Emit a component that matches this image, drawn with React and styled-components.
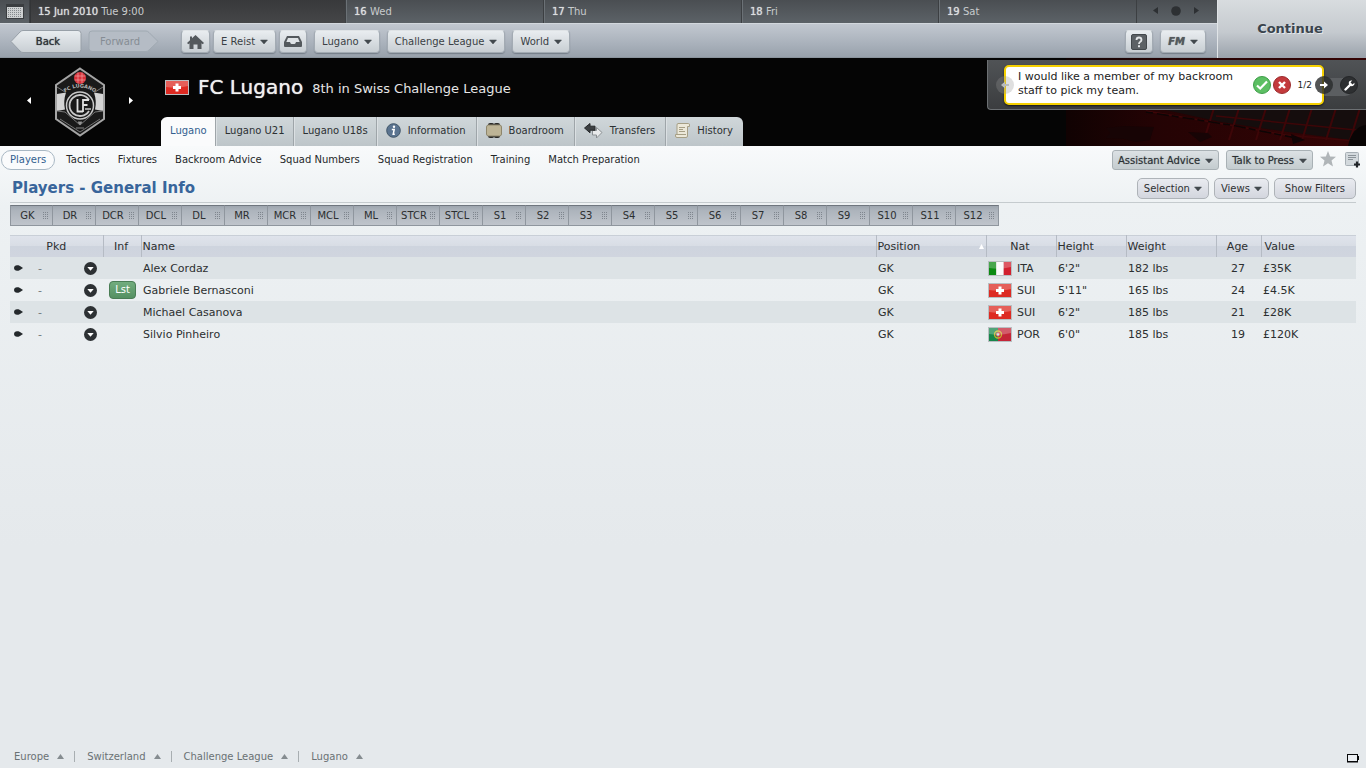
import React from "react";
import styled, { createGlobalStyle } from "styled-components";

const GlobalStyle = createGlobalStyle`
  * {
    box-sizing: border-box;
  }

  body {
    margin: 0;
    font-family: "DejaVu Sans", sans-serif;
    font-size: 10px;
    color: #2c2f30;
    background: #e5e9ec;
  }

  button {
    font-family: inherit;
    font-size: inherit;
    cursor: pointer;
  }

  a {
    color: inherit;
    text-decoration: none;
  }

  svg {
    display: block;
    flex-shrink: 0;
  }
`;

const Page = styled.div`
  min-height: 100vh;
  display: flex;
  flex-direction: column;
`;

/* ---------- top bar ---------- */

const TopBar = styled.header`
  display: flex;
  height: 58px;
`;

const TopLeft = styled.div`
  flex: 1;
  min-width: 0;
`;

const DateStrip = styled.div`
  display: grid;
  grid-template-columns: 30px 316fr 198fr 198fr 197fr 197fr 81px;
  height: 23px;
  background: linear-gradient(#4a4e52, #5c6267);
  color: #c8cbcd;
`;

const CalendarButton = styled.button`
  display: flex;
  align-items: center;
  justify-content: center;
  padding: 0;
  border: 0;
  background: transparent;
`;

const Day = styled.div`
  padding-left: 7px;
  line-height: 23px;
  font-size: 10px;
  border-left: 1px solid ${({ $today }) => ($today ? "#333537" : "#6b7176")};
  box-shadow: -1px 0 0 #3c3f42;
  background: ${({ $today }) => ($today ? "linear-gradient(#38393b, #454648)" : "none")};

  b {
    font-weight: normal;
    color: #dcdedf;
    text-shadow: 0 0 1px #dcdedf;
  }
`;

const DayControls = styled.div`
  display: flex;
  align-items: center;
  justify-content: center;
  padding: 0 2px 2px 0;
  border-left: 1px solid #3c3f42;

  button {
    display: block;
    padding: 0;
    border: 0;
    background: transparent;
  }
`;

const NavBar = styled.nav`
  display: flex;
  align-items: center;
  height: 35px;
  padding: 2px 11px 0 10px;
  border-top: 1px solid #d3d8dd;
  border-bottom: 1px solid #8a939c;
  background: linear-gradient(#c2c8d0, #a9b1bb 60%, #98a1ab);
`;

const ArrowButton = styled.button`
  position: relative;
  width: 72px;
  height: 23px;
  padding: 0 ${({ disabled }) => (disabled ? "8px 0 0" : "0 0 4px")};
  border: 0;
  background: transparent;
  color: ${({ disabled }) => (disabled ? "#858c94" : "#2e3338")};
  text-shadow: ${({ disabled }) => (disabled ? "none" : "0 0 1px #2e3338")};
  margin-right: ${({ disabled }) => (disabled ? "21px" : "6px")};

  svg {
    position: absolute;
    inset: 0;
  }

  span {
    position: relative;
  }
`;

const NavButton = styled.button`
  display: flex;
  align-items: center;
  justify-content: center;
  gap: 5px;
  min-width: 28px;
  height: 23px;
  padding: 0 ${({ $icon }) => ($icon ? "4px" : "7px")};
  margin-right: ${({ $gap }) => $gap || 0}px;
  border: 1px solid #a3abb3;
  border-top-color: #dfe3e6;
  border-radius: 4px;
  background: linear-gradient(#e9edf0, #c8ced3);
  box-shadow: 0 1px 1px rgba(60, 70, 80, 0.4);
  color: #3a3f44;
  white-space: nowrap;
`;

const Spacer = styled.div`
  flex: 1;
`;

const ContinueButton = styled.button`
  width: 149px;
  padding: 0 4px 2px 0;
  border: 0;
  border-left: 1px solid #e0e4e7;
  background: linear-gradient(#d8dcdf, #c5cacf 55%, #9aa2ab);
  color: #3a444d;
  && {
    font-size: 13px;
  }
  font-weight: bold;
  text-shadow: 1px 1px 0 #e4e8eb;
`;

/* ---------- club banner ---------- */

const Banner = styled.section`
  position: relative;
  display: flex;
  height: 88px;
  background: #050505;
  overflow: hidden;
`;

const StadiumArt = styled.div`
  position: absolute;
  top: 0;
  right: 0;
`;

const ClubSwitcher = styled.div`
  display: flex;
  align-items: center;
  justify-content: center;
  gap: 23px;
  width: 161px;
  padding-right: 1px;

  button {
    padding: 4px 0 8px;
    border: 0;
    background: transparent;
  }
`;

const ClubMain = styled.div`
  flex: 1;
  display: flex;
  flex-direction: column;
  justify-content: space-between;
`;

const ClubTitle = styled.div`
  display: flex;
  align-items: center;
  gap: 9px;
  height: 58px;
  padding-left: 4px;

  h1 {
    margin: 0;
    font-size: 20px;
    font-weight: normal;
    color: #f0f0f0;
    text-shadow: 0 0 1px #f0f0f0;
  }

  p {
    margin: 2px 0 0;
    font-size: 13px;
    color: #e6e6e6;
  }
`;

const Tabs = styled.nav`
  display: flex;
  align-self: flex-start;
  height: 29px;
  border-radius: 6px 6px 0 0;
  overflow: hidden;
`;

const Tab = styled.a`
  display: flex;
  align-items: center;
  gap: 7px;
  padding: 0 ${({ $icon }) => ($icon ? "10px 2px 8px" : "8px 2px")};
  border-right: 1px solid #9ea5a9;
  border-left: 1px solid ${({ $active }) => ($active ? "#fafbfc" : "#dbe0e3")};
  background: ${({ $active }) => ($active ? "#fafbfc" : "linear-gradient(#d0d7da, #bdc5c9)")};
  color: ${({ $active }) => ($active ? "#33608f" : "#2c3032")};
  white-space: nowrap;

  &:last-child {
    border-right: 0;
  }
`;

const MessagePanel = styled.aside`
  position: relative;
  display: flex;
  align-items: flex-start;
  width: 379px;
  height: 50px;
  margin-top: 2px;
  padding: 5px 42px 0 16px;
  border: solid #6c7073;
  border-width: 0 0 1px 1px;
  border-radius: 0 0 0 4px;
  background: linear-gradient(#505356, #3b3d3f);

  &::before {
    content: "";
    position: absolute;
    top: 18px;
    right: 12px;
    width: 40px;
    height: 18px;
    border-radius: 9px;
    background: #5b5e61;
  }
`;

const Message = styled.div`
  position: relative;
  flex: 1;
  display: flex;
  align-items: center;
  height: 40px;
  padding: 0 10px 0 12px;
  border: 2px solid #f5d000;
  border-radius: 5px;
  background: #fff;
  box-shadow: 0 1px 2px rgba(0, 0, 0, 0.6);
  color: #222;

  p {
    flex: 1;
    margin: 0 0 3px;
    font-size: 11px;
    line-height: 14px;
  }

  small {
    margin-left: 5px;
    font-size: 9px;
  }
`;

const RoundButton = styled.button`
  display: flex;
  align-items: center;
  justify-content: center;
  width: 18px;
  height: 18px;
  margin-right: 2px;
  padding: 0;
  border: 1px solid ${({ $edge }) => $edge};
  border-radius: 50%;
  background: ${({ $fill }) => $fill};
`;

const OverlayButton = styled(RoundButton)`
  position: absolute;
  top: 16px;
  ${({ $side }) => $side}: ${({ $offset }) => $offset}px;
  margin: 0;
`;

/* ---------- content ---------- */

const Content = styled.main`
  flex: 1;
  display: flex;
  flex-direction: column;
  background: linear-gradient(#f8fafb, #edf1f3 60px, #e5e9ec 400px);
`;

const SubNav = styled.nav`
  display: flex;
  align-items: center;
  height: 28px;
  padding: 0 6px 0 1px;
`;

const SubLink = styled.a`
  padding: 0 8px;
  margin-right: ${({ $active }) => ($active ? 2 : 0)}px;
  line-height: 18px;
  border: 1px solid ${({ $active }) => ($active ? "#a9b8c4" : "transparent")};
  border-radius: 10px;
  background: ${({ $active }) => ($active ? "#fafbfc" : "none")};
  color: ${({ $active }) => ($active ? "#33608f" : "#25282a")};
  white-space: nowrap;
`;

const ActionButton = styled.button`
  display: flex;
  align-items: center;
  justify-content: center;
  gap: 5px;
  height: 20px;
  padding: 0 5px;
  margin-right: 7px;
  border: 1px solid #a9b1b5;
  border-radius: 3px;
  background: linear-gradient(#dce1e4, #c4cccf);
  color: #2b3034;
  text-shadow: 0 0 1px #7b8084;
  white-space: nowrap;
`;

const IconButton = styled.button`
  padding: 0;
  margin-left: ${({ $gap }) => $gap || 0}px;
  border: 0;
  background: transparent;
`;

const TitleRow = styled.div`
  display: flex;
  align-items: center;
  gap: 5px;
  height: 29px;
  margin: 0 10px;
  border-bottom: 1px solid #c5cbce;

  h2 {
    flex: 1;
    margin: 0 0 0 2px;
    font-size: 15px;
    font-weight: bold;
    color: #38659b;
  }
`;

const FilterButton = styled.button`
  display: flex;
  align-items: center;
  justify-content: center;
  gap: 4px;
  height: 21px;
  padding: 0 ${({ $wide }) => ($wide ? "10px" : "6px")};
  border: 1px solid #aeb3b8;
  border-radius: 5px;
  background: linear-gradient(#e9ebf0, #d3d6de);
  color: #2e3032;
  white-space: nowrap;
`;

const Slots = styled.ul`
  display: flex;
  align-self: flex-start;
  margin: 2px 10px 9px;
  padding: 0;
  list-style: none;
`;

const Slot = styled.li`
  display: flex;
  align-items: center;
  justify-content: space-between;
  width: 43px;
  height: 21px;
  padding: 0 4px 0 1px;
  border: solid #8f969e;
  border-width: 1px 1px 1px 0;
  border-top-color: #6f767e;
  background: linear-gradient(#9ea6af, #adb4bc 25%, #bfc4cb);

  &:first-child {
    border-left-width: 1px;
  }

  span {
    flex: 1;
    text-align: center;
  }
`;

const Squad = styled.table`
  table-layout: fixed;
  width: calc(100% - 20px);
  margin: 0 10px;
  border-collapse: collapse;
  font-size: 11px;

  th,
  td {
    height: 22px;
    padding: 0 0 0 2px;
    font-weight: normal;
    text-align: left;
    white-space: nowrap;
  }

  th {
    padding-left: 1px;
  }

  th:last-child {
    padding-left: 3px;
  }

  thead tr {
    background: linear-gradient(#e0e4ec, #d8dde5 50%, #ced4de 51%, #d0d5df);
    box-shadow: inset 0 1px 0 #c9cfd7;
  }

  th + th {
    border-left: 1px solid #b5bbc4;
  }

  tbody tr:nth-child(odd) {
    background: #dde3e6;
  }
`;

const Col = styled.col`
  width: ${({ $width }) => $width}px;
`;

const CenterTh = styled.th`
  && {
    padding: 0 2px 0 0;
    text-align: center;
  }

  &&:first-child {
    padding: 0;
  }
`;

const SortHead = styled.div`
  display: flex;
  align-items: center;
  justify-content: space-between;
  padding-right: 2px;
`;

const PickCell = styled.div`
  display: flex;
  align-items: center;
  padding-left: 2px;

  span {
    flex: 1;
    padding-left: 15px;
    color: #70787c;
  }

  button {
    padding: 0;
    margin-right: 6px;
    border: 0;
    background: transparent;
  }
`;

const ListedBadge = styled.span`
  display: block;
  width: 27px;
  margin-left: 4px;
  line-height: 16px;
  border: 1px solid #4a7d55;
  border-radius: 4px;
  background: linear-gradient(#72ad7e, #559062);
  color: #fff;
  font-size: 10px;
  text-align: center;
`;

const Nation = styled.div`
  display: flex;
  align-items: center;
  gap: 5px;
`;

const AgeCell = styled.td`
  && {
    padding: 0 1px 0 0;
    text-align: center;
  }
`;

const Footer = styled.footer`
  display: flex;
  align-items: center;
  height: 24px;
  margin-top: auto;
  padding: 0 6px 0 14px;
  color: #6a7174;

  ol {
    display: flex;
    flex: 1;
    margin: 0;
    padding: 0;
    list-style: none;
  }

  li {
    display: flex;
    align-items: center;
    gap: 8px;
  }

  li + li {
    margin-left: 10px;
    padding-left: 12px;
    border-left: 1px solid #a8aeb1;
  }
`;

/* ---------- icons ---------- */

const Caret = ({ color = "#43494e" }) => (
  <svg width="8" height="7" viewBox="0 0 8 7" aria-hidden="true">
    <path d="M.5 2h7L4 6z" fill={color} stroke={color} strokeWidth=".5" />
  </svg>
);

const UpCaret = () => (
  <svg width="7" height="5" viewBox="0 0 7 5" aria-hidden="true">
    <path d="M0 5h7L3.500 0z" fill="#858c90" />
  </svg>
);

const Triangle = ({ dir = "left", color = "#fff", w = 4, h = 7 }) => (
  <svg width={w} height={h} viewBox="0 0 4 7" preserveAspectRatio="none" aria-hidden="true">
    <path d={dir === "left" ? "M4 0v7L0 3.500z" : "M0 0v7l4-3.500z"} fill={color} />
  </svg>
);

const CalendarIcon = () => (
  <svg width="18" height="15" viewBox="0 0 18 15" aria-hidden="true">
    <path d="M0 0h18v15H0z" fill="#3a3d40" />
    <path d="M1 3h16v11H1z" fill="#cdd0d1" />
    {[4.5, 6.5, 8.5, 10.5, 12.5].map((y) => (
      <path key={y} d={`M2 ${y}h14`} stroke="#84898c" strokeDasharray="1 1" />
    ))}
  </svg>
);

const HomeIcon = () => (
  <svg width="19" height="16" viewBox="0 0 19 16" aria-hidden="true">
    <path d="M9.500 1L18 9l-1.300 1.300L15.500 9.200V15h-4v-4.500h-4V15h-4V9.200l-1.200 1.100L1 9l3-2.800V2.500h2v1.800z" fill="#54595d" />
  </svg>
);

const InboxIcon = () => (
  <svg width="18" height="11" viewBox="0 0 18 11" aria-hidden="true">
    <path d="M3 0h12l3 6v4q0 1-1 1H1q-1 0-1-1V6z" fill="#54595d" />
    <path d="M4 2h10l1.700 4H12q-.500 2-1.500 2h-3Q6.500 8 6 6H2.300z" fill="#dfe3e6" />
  </svg>
);

const HelpIcon = () => (
  <svg width="16" height="16" viewBox="0 0 16 16" aria-hidden="true">
    <rect x=".5" y=".5" width="15" height="15" rx="1.500" fill="#5c6165" stroke="#43484c" />
    <path d="M5.500 6q0-2.500 2.500-2.500T10.500 6Q10.500 7 9 8 8 8.600 8 10" fill="none" stroke="#e3e6e8" strokeWidth="1.800" />
    <path d="M7 11.300h2v1.900H7z" fill="#e3e6e8" />
  </svg>
);

const FmText = styled.span`
  font-size: 10px;
  font-weight: bold;
  font-style: italic;
  color: #54595d;
  text-shadow: 0 0 1px #54595d;
`;

const InfoIcon = () => (
  <svg width="15" height="15" viewBox="0 0 15 15" aria-hidden="true">
    <circle cx="7.500" cy="7.500" r="6.800" fill="#5b7490" stroke="#3f5468" />
    <circle cx="8" cy="3.800" r="1.200" fill="#fff" />
    <path d="M5.800 6.500h2.400L7.200 11.300h1.600" fill="none" stroke="#fff" strokeWidth="1.500" />
  </svg>
);

const BoardIcon = () => (
  <svg width="16" height="15" viewBox="0 0 16 15" aria-hidden="true">
    <path d="M2 2Q2 0 4 0h2q1.500 0 2 1 .5-1 2-1h2q2 0 2 2zM2 13q0 2 2 2h2q1.500 0 2-1 .5 1 2 1h2q2 0 2-2z" fill="#2a2a28" />
    <rect x=".5" y="2" width="15" height="11" rx="2" fill="#bdb496" stroke="#8e866c" />
  </svg>
);

const TransferIcon = () => (
  <svg width="19" height="15" viewBox="0 0 19 15" aria-hidden="true">
    <path d="M18 9.500L12.500 4.500v3H8.500v4.500h4v3z" fill="#e8eaeb" stroke="#8b9093" />
    <path d="M.5 5L6 .5v2.700h5v4H6v2.600z" fill="#3c4042" stroke="#26292b" />
  </svg>
);

const HistoryIcon = () => (
  <svg width="15" height="15" viewBox="0 0 15 15" aria-hidden="true">
    <path d="M3 .5h10.500q1 0 1 1.500v1.500h-2V13q0 1.500-1.500 1.500H2Q.5 14.500.5 13v-1.500H2V2Q2 .5 3 .5z" fill="#ece8d9" stroke="#a69f85" />
    <path d="M4 4.500h6M4 6.500h4M4 8.500h6M2 11.500h9" stroke="#a69f85" />
  </svg>
);

const CheckIcon = () => (
  <svg width="12" height="10" viewBox="0 0 12 10" aria-hidden="true">
    <path d="M1 5.500l3.200 3L11 1.500" fill="none" stroke="#fff" strokeWidth="2.200" />
  </svg>
);

const CrossIcon = () => (
  <svg width="8" height="8" viewBox="0 0 8 8" aria-hidden="true">
    <path d="M1 1l6 6M7 1L1 7" stroke="#fff" strokeWidth="2.400" />
  </svg>
);

const SmallArrow = ({ dir = "right" }) => (
  <svg width="8" height="8" viewBox="0 0 8 8" aria-hidden="true">
    <path
      d={dir === "right" ? "M0 3h4V0.500L8 4 4 7.500V5H0z" : "M8 3H4V0.500L0 4l4 3.500V5h4z"}
      fill={dir === "right" ? "#fff" : "#b9bbbc"}
    />
  </svg>
);

const WrenchIcon = () => (
  <svg width="11" height="11" viewBox="0 0 11 11" aria-hidden="true">
    <path d="M1.500 9.500L6.500 4.500" stroke="#fff" strokeWidth="2.400" strokeLinecap="round" />
    <path d="M10.400 2.800L8.500 4.500 6.500 2.600 8.200.600Q5.500 0 4.800 2.200 4.300 4.300 6 5.500 7.700 6.700 9.500 5.600 11 4.500 10.400 2.800z" fill="#fff" />
  </svg>
);

const StarIcon = () => (
  <svg width="16" height="18" viewBox="0 0 16 18" aria-hidden="true">
    <path d="M8 0l2.100 5.400 5.900.4-4.500 3.800L13 15.500 8 12.300 3 15.500l1.500-5.900L0 5.800l5.900-.4z" fill="#b0b5b8" />
  </svg>
);

const NoteIcon = () => (
  <svg width="15" height="16" viewBox="0 0 15 16" aria-hidden="true">
    <rect x=".5" y=".5" width="13" height="13" rx="1" fill="#d3d9dd" stroke="#a7afb5" />
    <path d="M3 3.500h8M3 5.500h8M3 7.500h5" stroke="#8b9399" />
    <path d="M12 9.500v6M9 12.500h6" stroke="#202428" strokeWidth="2.200" />
  </svg>
);

const GripIcon = () => (
  <svg width="5" height="7" viewBox="0 0 5 7" shapeRendering="crispEdges" aria-hidden="true">
    {[0, 2, 4].map((x) => (
      <path key={x} d={`M${x + 0.5} 0v7`} stroke="#7f868e" strokeDasharray="1 1" />
    ))}
  </svg>
);

const PickIcon = () => (
  <svg width="9" height="6" viewBox="0 0 9 6" aria-hidden="true">
    <path d="M0 3Q.3.300 3 .300h1.500Q6 .800 9 3 6 5.200 4.500 5.700H3Q.3 5.700 0 3z" fill="#24292c" />
  </svg>
);

const RoundCaret = () => (
  <svg width="13" height="13" viewBox="0 0 13 13" aria-hidden="true">
    <circle cx="6.500" cy="6.500" r="6.500" fill="#2d3134" />
    <path d="M3.300 5h6.400L6.500 8.800z" fill="#fff" />
  </svg>
);

const StatusIcon = () => (
  <svg width="14" height="13" viewBox="0 0 14 13" aria-hidden="true">
    <rect x="1.500" y="4.500" width="10" height="7" fill="#eceff3" stroke="#08090a" />
    <path d="M12 6h1v4h-1zM1 11h11v1.500H1z" fill="#08090a" />
  </svg>
);

const Flag = ({ nation }) => (
  <svg width="24" height="15" viewBox="0 0 24 15" role="img" aria-label={nation}>
    <rect width="24" height="15" fill="#b9bec1" />
    {nation === "SUI" && (
      <>
        <path d="M1 1h22v13H1z" fill="#dd2a22" />
        <path d="M10.500 3.500h3V6H16v3h-2.500v2.500h-3V9H8V6h2.500z" fill="#fff" />
      </>
    )}
    {nation === "ITA" && (
      <>
        <path d="M1 1h7.300v13H1z" fill="#0b8a12" />
        <path d="M8.300 1h7.400v13H8.300z" fill="#fafafa" />
        <path d="M15.700 1H23v13h-7.300z" fill="#d2212f" />
      </>
    )}
    {nation === "POR" && (
      <>
        <path d="M1 1h9v13H1z" fill="#17864b" />
        <path d="M10 1h13v13H10z" fill="#c42638" />
        <circle cx="10" cy="7.500" r="3.500" fill="none" stroke="#c8b42c" strokeWidth="1.300" />
        <circle cx="10" cy="7.500" r="2.200" fill="#e2574d" />
        <circle cx="10" cy="7.500" r="1.200" fill="#bfe3ee" />
      </>
    )}
    <path d="M1 1h22v5Q12 9 1 7z" fill="#fff" opacity=".25" />
  </svg>
);

const Crest = () => (
  <svg width="52" height="70" viewBox="0 0 52 70" role="img" aria-label="FC Lugano">
    <defs>
      <path id="crest-arc" d="M9 27Q26 14 43 27" />
    </defs>
    <path d="M26 1.500L50 18v34L26 68.500 2 52V18z" fill="#1a1a1a" stroke="#a5a5a5" strokeWidth="2" />
    <path d="M3 27l9-1.500q-3 9-1 17L3 44zM49 27l-9-1.500q3 9 1 17l8 1.500z" fill="#d4d4d4" />
    <path d="M3 20l8 5M49 20l-8 5M3 44l8 1 15 13 15-13 8-1M6 52l20 13 20-13" fill="none" stroke="#777" />
    <circle cx="26" cy="11" r="6" fill="#d9323b" />
    <path d="M20.500 9h11M20.500 13h11M24 5.500v11M28 5.500v11" stroke="#f1a0a0" strokeWidth=".7" />
    <text fontFamily="DejaVu Sans" fontSize="5" fontWeight="bold" fill="#b4b4b4" textAnchor="middle">
      <textPath href="#crest-arc" startOffset="50%">FC LUGANO</textPath>
    </text>
    <circle cx="26" cy="38.500" r="13.500" fill="#1a1a1a" stroke="#c9c9c9" strokeWidth="1.500" />
    <path d="M35 33A10.500 10.500 0 1 0 35 44" fill="none" stroke="#c9c9c9" strokeWidth="1.800" />
    <path d="M37 42h-6" stroke="#c9c9c9" strokeWidth="1.500" />
    <path d="M23.500 32v12.500h5.500M29 45V33h6M29 38h4.500" fill="none" stroke="#e0e0e0" strokeWidth="1.800" />
    <path d="M24 55h4l-2 3zM22 61h8" fill="#aaa" stroke="#888" />
  </svg>
);

const Stadium = () => (
  <svg width="300" height="88" viewBox="0 0 300 88" aria-hidden="true">
    <defs>
      <linearGradient id="stand" x1="0" x2="1">
        <stop offset="0" stopColor="#100202" />
        <stop offset=".3" stopColor="#240304" />
        <stop offset="1" stopColor="#350405" />
      </linearGradient>
    </defs>
    <path d="M0 0h300v88H0z" fill="url(#stand)" />
    <path d="M90 50h210v34L215 73l-60-9z" fill="#150d0d" />
    <g stroke="#3d0608" fill="none">
      <path d="M80 53l60 10 80 14 80 7M150 58l150 15" strokeWidth="1.500" />
      {[140, 165, 192, 216, 238, 262, 286].map((x) => (
        <path key={x} d={`M${x + 8} 50L${x - 2} 82`} strokeWidth="2" />
      ))}
    </g>
    <path d="M80 54l40 6 50 8 60 12" stroke="#0d0505" strokeWidth="1.500" strokeDasharray="7 4 12 3" fill="none" />
    <path d="M40 70l18-2 30 1-4 13-14 2-12-3-18-1 4-5zM122 74l20 1 4 4-12 5z" fill="#170405" />
    <path d="M225 76l14 6-12 4z" fill="#100405" />
    <path d="M282 88q4-19 18-21v21z" fill="#090404" />
  </svg>
);

/* ---------- data ---------- */

const DAYS = [
  ["16", "Wed"],
  ["17", "Thu"],
  ["18", "Fri"],
  ["19", "Sat"],
];

const TABS = [
  { label: "Lugano", active: true },
  { label: "Lugano U21" },
  { label: "Lugano U18s" },
  { label: "Information", icon: <InfoIcon /> },
  { label: "Boardroom", icon: <BoardIcon /> },
  { label: "Transfers", icon: <TransferIcon /> },
  { label: "History", icon: <HistoryIcon /> },
];

const SUB_LINKS = [
  "Players",
  "Tactics",
  "Fixtures",
  "Backroom Advice",
  "Squad Numbers",
  "Squad Registration",
  "Training",
  "Match Preparation",
];

const SLOTS = [
  "GK", "DR", "DCR", "DCL", "DL", "MR", "MCR", "MCL", "ML", "STCR", "STCL",
  "S1", "S2", "S3", "S4", "S5", "S6", "S7", "S8", "S9", "S10", "S11", "S12",
];

const PLAYERS = [
  { name: "Alex Cordaz", nat: "ITA", height: "6'2\"", weight: "182 lbs", age: 27, value: "£35K" },
  { name: "Gabriele Bernasconi", listed: true, nat: "SUI", height: "5'11\"", weight: "165 lbs", age: 24, value: "£4.5K" },
  { name: "Michael Casanova", nat: "SUI", height: "6'2\"", weight: "185 lbs", age: 21, value: "£28K" },
  { name: "Silvio Pinheiro", nat: "POR", height: "6'0\"", weight: "185 lbs", age: 19, value: "£120K" },
];

const TRAIL = ["Europe", "Switzerland", "Challenge League", "Lugano"];

const App = () => (
  <Page>
    <GlobalStyle />

    <TopBar>
      <TopLeft>
        <DateStrip>
          <CalendarButton aria-label="Calendar">
            <CalendarIcon />
          </CalendarButton>
          <Day $today>
            <b>15 Jun 2010</b> Tue 9:00
          </Day>
          {DAYS.map(([date, day]) => (
            <Day key={date}>
              <b>{date}</b> {day}
            </Day>
          ))}
          <DayControls>
            <button aria-label="Previous day">
              <Triangle color="#2d3033" w={5} h={7} />
            </button>
            <button aria-label="Today">
              <svg width="36" height="10" viewBox="0 0 36 10">
                <circle cx="18" cy="5" r="4.800" fill="#2d3033" />
              </svg>
            </button>
            <button aria-label="Next day">
              <Triangle dir="right" color="#2d3033" w={5} h={7} />
            </button>
          </DayControls>
        </DateStrip>

        <NavBar>
          <ArrowButton>
            <svg width="72" height="23" viewBox="0 0 72 23" aria-hidden="true">
              <defs>
                <linearGradient id="back" x2="0" y2="1">
                  <stop offset="0" stopColor="#e9edf0" />
                  <stop offset="1" stopColor="#c8ced3" />
                </linearGradient>
              </defs>
              <path d="M1 11.500L10 2q1.500-1.500 3-1.500h55q3 0 3 3v16q0 3-3 3H13q-1.500 0-3-1.500z" fill="url(#back)" stroke="#98a0a8" />
            </svg>
            <span>Back</span>
          </ArrowButton>
          <ArrowButton disabled>
            <svg width="72" height="23" viewBox="0 0 72 23" aria-hidden="true">
              <path d="M70 11.500L61 2.500Q59.500 1 58 1H4Q1 1 1 4v14.500q0 3 3 3h54q1.500 0 3-1.500z" fill="#b5bcc5" stroke="#a0a9b2" />
            </svg>
            <span>Forward</span>
          </ArrowButton>
          <NavButton $icon $gap={3} aria-label="Home">
            <HomeIcon />
          </NavButton>
          <NavButton $gap={3}>
            E Reist <Caret />
          </NavButton>
          <NavButton $icon $gap={7} aria-label="Inbox">
            <InboxIcon />
          </NavButton>
          <NavButton $gap={7}>
            Lugano <Caret />
          </NavButton>
          <NavButton $gap={7}>
            Challenge League <Caret />
          </NavButton>
          <NavButton>
            World <Caret />
          </NavButton>
          <Spacer />
          <NavButton $icon $gap={7} aria-label="Help">
            <HelpIcon />
          </NavButton>
          <NavButton>
            <FmText>FM</FmText> <Caret />
          </NavButton>
        </NavBar>
      </TopLeft>
      <ContinueButton>Continue</ContinueButton>
    </TopBar>

    <Banner>
      <StadiumArt>
        <Stadium />
      </StadiumArt>
      <ClubSwitcher>
        <button aria-label="Previous club">
          <Triangle />
        </button>
        <Crest />
        <button aria-label="Next club">
          <Triangle dir="right" />
        </button>
      </ClubSwitcher>
      <ClubMain>
        <ClubTitle>
          <Flag nation="SUI" />
          <h1>FC Lugano</h1>
          <p>8th in Swiss Challenge League</p>
        </ClubTitle>
        <Tabs>
          {TABS.map(({ label, active, icon }) => (
            <Tab key={label} href="#" $active={active} $icon={Boolean(icon)}>
              {icon}
              {label}
            </Tab>
          ))}
        </Tabs>
      </ClubMain>
      <MessagePanel>
        <Message>
          <p>I would like a member of my backroom staff to pick my team.</p>
          <RoundButton $fill="#5cbf63" $edge="#3f9e49" aria-label="Accept">
            <CheckIcon />
          </RoundButton>
          <RoundButton $fill="#c33a3c" $edge="#9c2c2e" aria-label="Decline">
            <CrossIcon />
          </RoundButton>
          <small>1/2</small>
        </Message>
        <OverlayButton $side="left" $offset={8} $fill="rgba(150, 150, 150, 0.3)" $edge="transparent" aria-label="Previous message">
          <SmallArrow dir="left" />
        </OverlayButton>
        <OverlayButton $side="right" $offset={33} $fill="rgba(40, 42, 44, 0.8)" $edge="transparent" aria-label="Next message">
          <SmallArrow />
        </OverlayButton>
        <OverlayButton $side="right" $offset={8} $fill="#2d2f31" $edge="#242628" aria-label="Message options">
          <WrenchIcon />
        </OverlayButton>
      </MessagePanel>
    </Banner>

    <Content>
      <SubNav>
        {SUB_LINKS.map((label, index) => (
          <SubLink key={label} href="#" $active={index === 0}>
            {label}
          </SubLink>
        ))}
        <Spacer />
        <ActionButton>
          Assistant Advice <Caret />
        </ActionButton>
        <ActionButton>
          Talk to Press <Caret />
        </ActionButton>
        <IconButton aria-label="Favourite">
          <StarIcon />
        </IconButton>
        <IconButton $gap={9} aria-label="Add note">
          <NoteIcon />
        </IconButton>
      </SubNav>

      <TitleRow>
        <h2>Players - General Info</h2>
        <FilterButton>
          Selection <Caret />
        </FilterButton>
        <FilterButton>
          Views <Caret />
        </FilterButton>
        <FilterButton $wide>Show Filters</FilterButton>
      </TitleRow>

      <Slots>
        {SLOTS.map((slot) => (
          <Slot key={slot}>
            <span>{slot}</span>
            <GripIcon />
          </Slot>
        ))}
      </Slots>

      <Squad>
        <colgroup>
          <Col $width={93} />
          <Col $width={38} />
          <col />
          <Col $width={110} />
          <Col $width={70} />
          <Col $width={70} />
          <Col $width={90} />
          <Col $width={45} />
          <Col $width={95} />
        </colgroup>
        <thead>
          <tr>
            <CenterTh>Pkd</CenterTh>
            <CenterTh>Inf</CenterTh>
            <th>Name</th>
            <th>
              <SortHead>
                Position
                <svg width="5" height="5" viewBox="0 0 5 5" aria-hidden="true">
                  <path d="M0 5h5L2.500 0z" fill="#fff" />
                </svg>
              </SortHead>
            </th>
            <CenterTh>Nat</CenterTh>
            <th>Height</th>
            <th>Weight</th>
            <CenterTh>Age</CenterTh>
            <th>Value</th>
          </tr>
        </thead>
        <tbody>
          {PLAYERS.map((player) => (
            <tr key={player.name}>
              <td>
                <PickCell>
                  <PickIcon />
                  <span>-</span>
                  <button aria-label={`Pick ${player.name}`}>
                    <RoundCaret />
                  </button>
                </PickCell>
              </td>
              <td>{player.listed && <ListedBadge>Lst</ListedBadge>}</td>
              <td>{player.name}</td>
              <td>GK</td>
              <td>
                <Nation>
                  <Flag nation={player.nat} />
                  {player.nat}
                </Nation>
              </td>
              <td>{player.height}</td>
              <td>{player.weight}</td>
              <AgeCell>{player.age}</AgeCell>
              <td>{player.value}</td>
            </tr>
          ))}
        </tbody>
      </Squad>

      <Footer>
        <ol>
          {TRAIL.map((place) => (
            <li key={place}>
              <a href="#">{place}</a>
              <UpCaret />
            </li>
          ))}
        </ol>
        <StatusIcon />
      </Footer>
    </Content>
  </Page>
);

export default App;
